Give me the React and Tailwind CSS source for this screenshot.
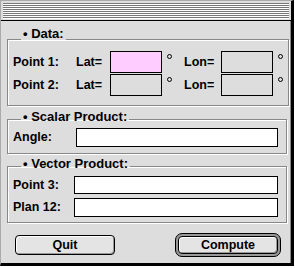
import React from 'react';

const font = { fontFamily: '"Liberation Sans", Arial, sans-serif' };

function Group({ title, pb, className = '', children }) {
  return (
    <fieldset className={`w-[280px] border border-[#888] shadow-[1px_1px_0_#fff,inset_1px_1px_0_#fff] px-[5px] ${className}`}>
      <legend className={`ml-[8px] px-[2px] text-[13px] leading-[14px] font-bold text-black ${pb}`}>• {title}</legend>
      {children}
    </fieldset>
  );
}

function Field({ className = '' }) {
  return <div className={`border border-black ${className}`}></div>;
}

function Degree() {
  return <span className="w-[5px] h-[5px] rounded-full border border-black -mt-[8px]"></span>;
}

export default function App() {
  return (
    <div className="w-[295px] h-[268px] bg-white" style={font}>
      <div className="w-[294px] h-[266px] flex flex-col border-l border-t border-[#aaa] border-r-[3px] border-b-[3px] border-r-black border-b-black bg-[#dddddd]">
        {/* title bar */}
        <div className="h-[20px] px-[2px] pt-[2px] border-b border-black shrink-0">
          <div className="h-[16px] bg-[repeating-linear-gradient(to_bottom,#777_0px,#777_1px,#fff_1px,#fff_2px)]"></div>
        </div>

        <div className="flex-1 pl-[6px] pt-[6px] border-r border-[#888] text-black">
          <Group title="Data:" pb="pb-[10px]">
            <div className="flex flex-col gap-[1px] pb-[9px]">
              {[['Point 1:', 'bg-[#ffccff]'], ['Point 2:', 'bg-[#dddddd]']].map(([label, fill]) => (
                <div key={label} className="flex items-center h-[22px] text-[12.5px] font-bold">
                  <span className="w-[63px]">{label}</span>
                  <span className="w-[34px]">Lat=</span>
                  <Field className={`w-[52px] h-[22px] ${fill}`} />
                  <span className="w-[22px] pl-[5px] flex"><Degree /></span>
                  <span className="w-[37px]">Lon=</span>
                  <Field className="w-[52px] h-[22px] bg-[#dddddd]" />
                  <span className="pl-[5px] flex"><Degree /></span>
                </div>
              ))}
            </div>
          </Group>

          <Group title="Scalar Product:" pb="pb-[4px]" className="mt-[4px]">
            <div className="flex items-center pb-[6px] text-[12.5px] font-bold">
              <span className="w-[63px]">Angle:</span>
              <Field className="w-[202px] h-[19px] bg-white" />
            </div>
          </Group>

          <Group title="Vector Product:" pb="pb-[5px]" className="mt-[3px]">
            <div className="flex flex-col gap-[3px] pb-[5px] text-[12.5px] font-bold">
              <div className="flex items-center">
                <span className="w-[61px]">Point 3:</span>
                <Field className="w-[204px] h-[18px] bg-white" />
              </div>
              <div className="flex items-center">
                <span className="w-[61px]">Plan 12:</span>
                <Field className="w-[204px] h-[19px] bg-white" />
              </div>
            </div>
          </Group>

          <div className="flex items-center justify-between w-[274px] mt-[10px] pl-[8px]">
            <button className="w-[100px] h-[20px] rounded-[4px] border border-black bg-[#e4e4e4] shadow-[inset_1px_1px_0_#fff,inset_-1px_-1px_0_#999] text-[12.5px] font-bold leading-none">
              Quit
            </button>
            <div className="rounded-[7px] border border-black bg-[#999] p-[2px]">
              <button className="w-[100px] h-[18px] rounded-[4px] border border-black bg-[#e4e4e4] shadow-[inset_1px_1px_0_#fff,inset_-1px_-1px_0_#999] text-[12.5px] font-bold leading-none block">
                Compute
              </button>
            </div>
          </div>
        </div>
      </div>
    </div>
  );
}
